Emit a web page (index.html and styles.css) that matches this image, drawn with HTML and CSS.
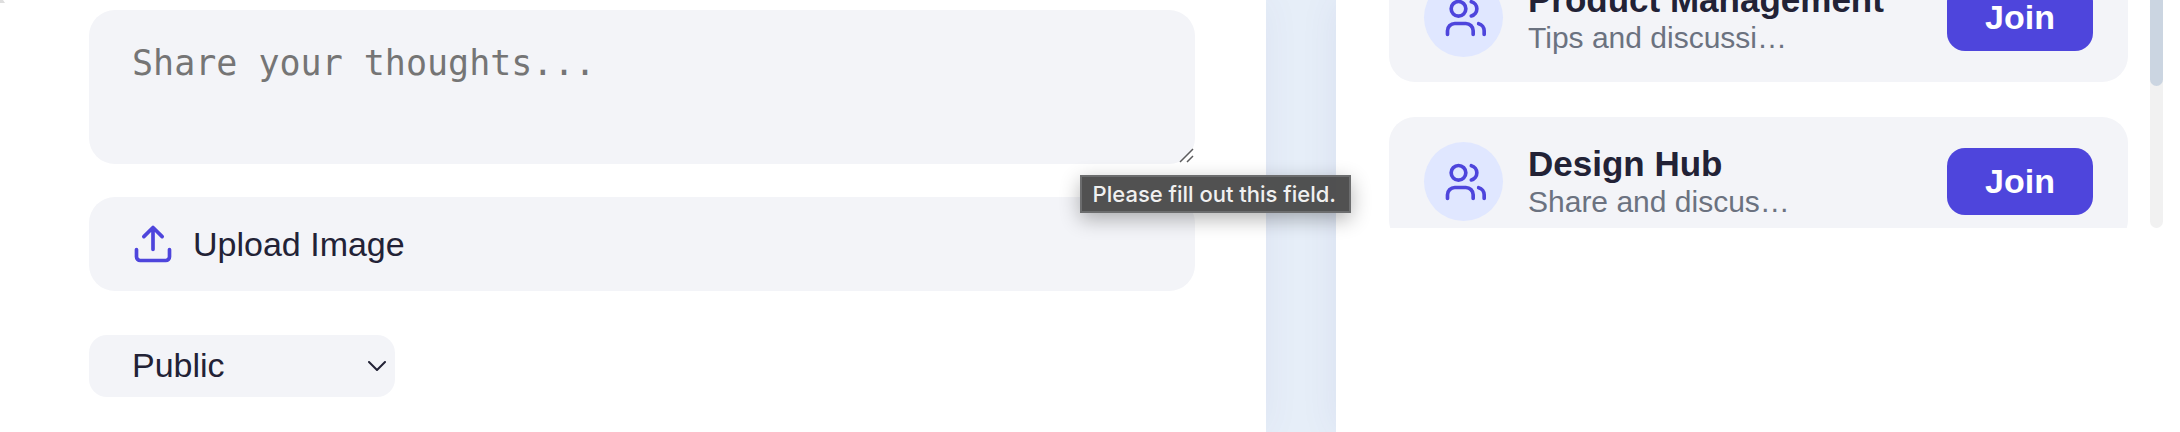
FILE: index.html
```html
<!DOCTYPE html>
<html lang="en">
<head>
<meta charset="utf-8">
<title>Community</title>
<link rel="stylesheet" href="styles.css">
</head>
<body>
<svg class="symbols" aria-hidden="true">
  <symbol id="users" viewBox="0 0 24 24">
    <path d="M17 21v-2a4 4 0 0 0-4-4H7a4 4 0 0 0-4 4v2"/>
    <circle cx="9" cy="7" r="4"/>
    <path d="M23 21v-2a4 4 0 0 0-3-3.87"/>
    <path d="M16 3.13a4 4 0 0 1 0 7.75"/>
  </symbol>
</svg>
<div class="layout">
  <main class="composer">
    <svg class="corner" viewBox="0 0 5 3" aria-hidden="true"><path d="M0 0h3l2 3H0z"/></svg>
    <form class="post-form">
      <div class="field">
        <textarea class="thoughts" placeholder="Share your thoughts..." aria-label="Share your thoughts" required></textarea>
        <svg class="resizer" viewBox="0 0 16 16" aria-hidden="true"><path d="M2 15 15 2M9 15l6-6"/></svg>
        <div class="tooltip" role="tooltip">Please fill out this field.</div>
      </div>
      <button class="upload" type="button">
        <svg class="icon" viewBox="0 0 24 24" aria-hidden="true">
          <path d="M21 15v4a2 2 0 0 1-2 2H5a2 2 0 0 1-2-2v-4"/>
          <path d="M17 8l-5-5-5 5M12 3v12"/>
        </svg>
        <span>Upload Image</span>
      </button>
      <div class="visibility">
        <select class="visibility-select" aria-label="Visibility">
          <option>Public</option>
          <option>Private</option>
        </select>
        <svg class="chevron" viewBox="0 0 18 10" aria-hidden="true"><path d="M1 1l8 8 8-8"/></svg>
      </div>
    </form>
  </main>
  <aside class="communities">
    <div class="viewport">
      <ul class="list">
        <li class="card">
          <span class="avatar"><svg class="icon" aria-hidden="true"><use href="#users"/></svg></span>
          <div class="info">
            <h3 class="name">Product Management</h3>
            <p class="about">Tips and discussi…</p>
          </div>
          <button class="join" type="button">Join</button>
        </li>
        <li class="card">
          <span class="avatar"><svg class="icon" aria-hidden="true"><use href="#users"/></svg></span>
          <div class="info">
            <h3 class="name">Design Hub</h3>
            <p class="about">Share and discus…</p>
          </div>
          <button class="join" type="button">Join</button>
        </li>
      </ul>
      <div class="track"><div class="thumb"></div></div>
    </div>
  </aside>
</div>
</body>
</html>
```
FILE: styles.css
```css
* {
  box-sizing: border-box;
}

body {
  margin: 0;
  background: #e6eef8;
  color: #222236;
  font-family: "Liberation Sans", Arial, sans-serif;
  font-size: 34px;
}

.symbols {
  position: absolute;
  width: 0;
  height: 0;
}

.layout {
  display: grid;
  grid-template-columns: 3fr 2fr;
  gap: 70px;
  min-height: 100vh;
  overflow: hidden;
}

.composer,
.communities {
  min-width: 0;
  background: #fff;
}

.composer {
  position: relative;
  z-index: 1;
  padding: 10px 71px 34px 89px;
  box-shadow: 0 0 36px rgba(79, 70, 150, 0.06);
}

.communities {
  padding: 0 17px 0 53px;
  box-shadow: 0 0 36px rgba(79, 70, 150, 0.08);
}

.corner {
  position: absolute;
  top: 0;
  left: 0;
  width: 5px;
  height: 3px;
  fill: #dedede;
}

.post-form {
  display: flex;
  flex-direction: column;
}

.field {
  position: relative;
  display: flex;
}

.thoughts {
  width: 100%;
  height: 154px;
  padding: 33px 43px;
  border: 0;
  border-radius: 26px;
  background: #f3f4f8;
  color: inherit;
  font-family: "DejaVu Sans Mono", monospace;
  font-size: 35px;
  line-height: 40px;
  resize: none;
}

.thoughts::placeholder {
  color: #757575;
}

.resizer {
  position: absolute;
  right: 1px;
  bottom: 1px;
  width: 16px;
  height: 16px;
  fill: none;
  stroke: #5c5c5e;
  stroke-width: 1.5;
}

.tooltip {
  position: absolute;
  top: 165px;
  right: -156px;
  z-index: 2;
  padding: 4px 13px 4px 11px;
  border: 2px solid #6c6d6e;
  background: rgba(74, 74, 74, 0.96);
  box-shadow: 0 6px 20px rgba(0, 0, 0, 0.3);
  color: #f0f0f0;
  font-family: Inter, sans-serif;
  font-size: 22px;
  font-weight: 500;
  line-height: 26px;
  white-space: nowrap;
}

.icon {
  flex: none;
  width: 44px;
  height: 44px;
  fill: none;
  stroke: #4e45dc;
  stroke-width: 2;
  stroke-linecap: round;
  stroke-linejoin: round;
}

.upload {
  display: flex;
  align-items: center;
  gap: 18px;
  margin-top: 33px;
  padding: 25px 42px;
  border: 0;
  border-radius: 26px;
  background: #f3f4f8;
  color: inherit;
  font: inherit;
}

.visibility {
  position: relative;
  align-self: flex-start;
  display: flex;
  margin-top: 44px;
}

.visibility-select {
  width: 306px;
  padding: 10px 43px 12px;
  border: 0;
  border-radius: 18px;
  appearance: none;
  background: #f3f4f8;
  color: inherit;
  font: inherit;
  line-height: 40px;
}

.chevron {
  position: absolute;
  top: 26px;
  right: 9px;
  width: 18px;
  height: 10px;
  fill: none;
  stroke: #222236;
  stroke-width: 2;
  stroke-linecap: round;
  stroke-linejoin: round;
  pointer-events: none;
}

.viewport {
  display: flex;
  gap: 22px;
  height: 228px;
  overflow: hidden;
}

.list {
  flex: 1;
  display: flex;
  flex-direction: column;
  gap: 35px;
  min-width: 0;
  margin: -47px 0 0;
  padding: 0;
  list-style: none;
}

.card {
  display: flex;
  flex: none;
  align-items: center;
  gap: 25px;
  padding: 25px 35px;
  border-radius: 26px;
  background: #f3f4f8;
}

.avatar {
  flex: none;
  display: grid;
  place-items: center;
  width: 79px;
  height: 79px;
  border-radius: 50%;
  background: #e0e7ff;
}

.info {
  flex: 1;
  min-width: 0;
  white-space: nowrap;
}

.name {
  margin: 0;
  font-size: 35px;
  line-height: 40px;
}

.about {
  margin: 0;
  color: #6b7280;
  font-size: 30px;
  line-height: 36px;
}

.join {
  flex: none;
  width: 146px;
  height: 67px;
  padding: 0;
  border: 0;
  border-radius: 18px;
  background: #4e45dc;
  color: #fff;
  font: inherit;
  font-weight: 700;
}

.track {
  width: 13px;
  border-radius: 7px;
  background: #f1f1f1;
}

.thumb {
  height: 86px;
  border-radius: 0 0 7px 7px;
  background: #cbd5e1;
}
```
